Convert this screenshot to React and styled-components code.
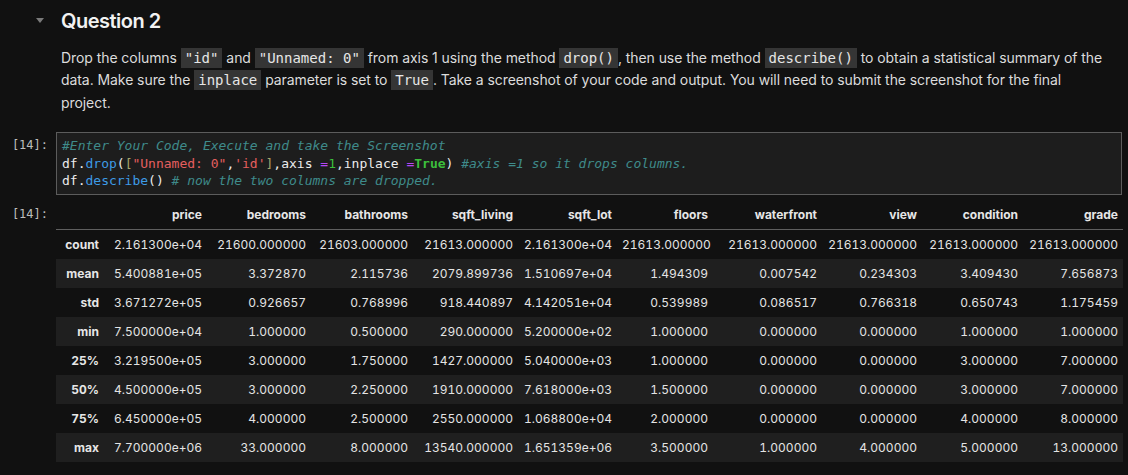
import React from 'react';
import styled, { createGlobalStyle } from 'styled-components';

const GlobalStyle = createGlobalStyle`
  html, body {
    margin: 0;
    padding: 0;
    background: #111111;
  }
  body {
    font-family: Inter, "Noto Sans", sans-serif;
    color: #dedede;
  }
`

const Page = styled.div`
  width: 1128px;
  height: 475px;
  overflow: hidden;
  background: #111111;
`

const Cell = styled.div`
  display: grid;
  grid-template-columns: 56px 1fr;
  padding-right: 6px;
  margin-top: ${props => props.gap || 0}px;
`

const Collapser = styled.div`
  display: flex;
  justify-content: flex-end;
  padding: 18px 12px 0 0;
`

const Caret = styled.span`
  width: 0;
  height: 0;
  border-left: 4.5px solid transparent;
  border-right: 4.5px solid transparent;
  border-top: 5px solid #7a7a7a;
`

const MdBody = styled.div`
  padding: 9px 0 0 5px;
`

const Heading = styled.h2`
  margin: 0;
  font-size: 20px;
  line-height: 24px;
  font-weight: 600;
  color: #f2f2f2;
  letter-spacing: -0.5px;
`

const Para = styled.p`
  margin: 14px 0 0;
  font-size: 14px;
  line-height: 22.4px;
  color: #dcdcdc;
  white-space: nowrap;
  letter-spacing: -0.07px;
`

const InlineCode = styled.code`
  font-family: "DejaVu Sans Mono", "Liberation Mono", monospace;
  font-size: 14px;
  line-height: 1;
  letter-spacing: 0;
  background: #353535;
  color: #e6e6e6;
  padding: 2px 4px;
`

const Prompt = styled.div`
  font-family: "DejaVu Sans Mono", "Liberation Mono", monospace;
  font-size: 12px;
  color: #bdbdbd;
  text-align: right;
  padding: ${props => props.top}px 8px 0 0;
  line-height: 17.6px;
`

const Editor = styled.pre`
  margin: 0;
  background: #1d1d1d;
  border: 1px solid #5c5c5c;
  padding: 4px 5px;
  font-family: "DejaVu Sans Mono", "Liberation Mono", monospace;
  font-size: 13px;
  line-height: 17.6px;
  color: #ececec;
`

const Tok = styled.span`
  color: ${props => props.c};
  font-style: ${props => (props.italic ? 'italic' : 'normal')};
  font-weight: ${props => (props.bold ? 'bold' : 'normal')};
`

const Table = styled.table`
  width: 100%;
  border-collapse: collapse;
  table-layout: fixed;
  font-size: 12px;
  color: #e4e4e4;
  font-variant-numeric: tabular-nums;
`

const Th = styled.th`
  text-align: right;
  font-weight: bold;
  padding: 0 5px;
  height: 29px;
  line-height: 16px;
  color: #e6e6e6;
`

const HeadRow = styled.tr`
  border-bottom: 1px solid #5f5f5f;
`

const Row = styled.tr`
  background: ${props => (props.odd ? '#1f1f1f' : 'transparent')};
`

const Td = styled.td`
  text-align: right;
  padding: 0 5px;
  height: 29px;
  line-height: 16px;
  white-space: nowrap;
`

const columns = ['price', 'bedrooms', 'bathrooms', 'sqft_living', 'sqft_lot', 'floors', 'waterfront', 'view', 'condition', 'grade']
const widths = [48, 103, 104, 102, 105, 99, 96, 109, 100, 101, 100]

const rows = [
  ['count', '2.161300e+04', '21600.000000', '21603.000000', '21613.000000', '2.161300e+04', '21613.000000', '21613.000000', '21613.000000', '21613.000000', '21613.000000'],
  ['mean', '5.400881e+05', '3.372870', '2.115736', '2079.899736', '1.510697e+04', '1.494309', '0.007542', '0.234303', '3.409430', '7.656873'],
  ['std', '3.671272e+05', '0.926657', '0.768996', '918.440897', '4.142051e+04', '0.539989', '0.086517', '0.766318', '0.650743', '1.175459'],
  ['min', '7.500000e+04', '1.000000', '0.500000', '290.000000', '5.200000e+02', '1.000000', '0.000000', '0.000000', '1.000000', '1.000000'],
  ['25%', '3.219500e+05', '3.000000', '1.750000', '1427.000000', '5.040000e+03', '1.000000', '0.000000', '0.000000', '3.000000', '7.000000'],
  ['50%', '4.500000e+05', '3.000000', '2.250000', '1910.000000', '7.618000e+03', '1.500000', '0.000000', '0.000000', '3.000000', '7.000000'],
  ['75%', '6.450000e+05', '4.000000', '2.500000', '2550.000000', '1.068800e+04', '2.000000', '0.000000', '0.000000', '4.000000', '8.000000'],
  ['max', '7.700000e+06', '33.000000', '8.000000', '13540.000000', '1.651359e+06', '3.500000', '1.000000', '4.000000', '5.000000', '13.000000'],
]

const COMMENT = '#3f8b8b'
const FUNC = '#3d9be6'
const STR = '#e45f5f'
const NUM = '#3cbf3c'
const OP = '#b347f5'
const BRACKET = '#a5a46a'

export default function App() {
  return (
    <Page>
      <GlobalStyle />
      <Cell>
        <Collapser><Caret /></Collapser>
        <MdBody>
          <Heading>Question 2</Heading>
          <Para>
            Drop the columns <InlineCode>"id"</InlineCode> and <InlineCode>"Unnamed: 0"</InlineCode> from axis 1 using the method <InlineCode>drop()</InlineCode>, then use the method <InlineCode>describe()</InlineCode> to obtain a statistical summary of the
            <br />
            data. Make sure the <InlineCode>inplace</InlineCode> parameter is set to <InlineCode>True</InlineCode>. Take a screenshot of your code and output. You will need to submit the screenshot for the final
            <br />
            project.
          </Para>
        </MdBody>
      </Cell>

      <Cell gap={18}>
        <Prompt top={5}>[14]:</Prompt>
        <Editor>
          <Tok c={COMMENT} italic>#Enter Your Code, Execute and take the Screenshot</Tok>{'\n'}
          df.<Tok c={FUNC}>drop</Tok>(<Tok c={BRACKET}>[</Tok><Tok c={STR}>"Unnamed: 0"</Tok>,<Tok c={STR}>'id'</Tok><Tok c={BRACKET}>]</Tok>,axis <Tok c={OP}>=</Tok><Tok c={NUM}>1</Tok>,inplace <Tok c={OP}>=</Tok><Tok c={NUM} bold>True</Tok>) <Tok c={COMMENT} italic>#axis =1 so it drops columns.</Tok>{'\n'}
          df.<Tok c={FUNC}>describe</Tok>() <Tok c={COMMENT} italic># now the two columns are dropped.</Tok>
        </Editor>
      </Cell>

      <Cell gap={5}>
        <Prompt top={6}>[14]:</Prompt>
        <div>
          <Table>
            <colgroup>
              {widths.map((w, i) => <col key={i} style={{ width: w }} />)}
            </colgroup>
            <thead>
              <HeadRow>
                <Th />
                {columns.map(c => <Th key={c}>{c}</Th>)}
              </HeadRow>
            </thead>
            <tbody>
              {rows.map((r, i) => (
                <Row key={r[0]} odd={i % 2 === 1}>
                  <Th>{r[0]}</Th>
                  {r.slice(1).map((v, j) => <Td key={j}>{v}</Td>)}
                </Row>
              ))}
            </tbody>
          </Table>
        </div>
      </Cell>
    </Page>
  )
}
